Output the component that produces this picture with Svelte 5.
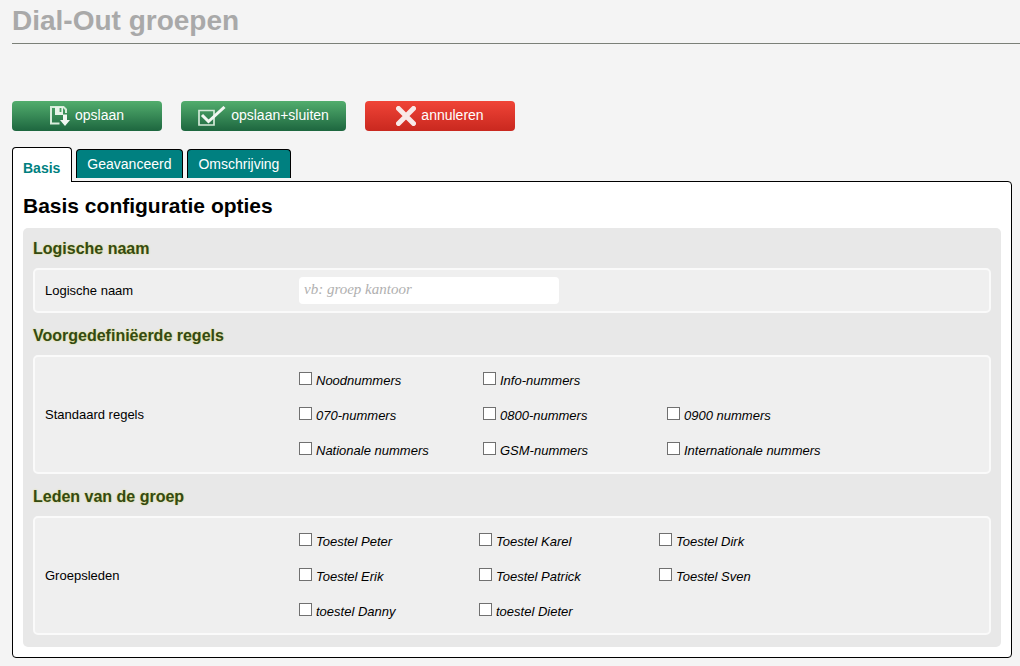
<script>
  /** Dial-Out groepen — formulier om een groep aan te maken of te wijzigen. */

  const tabs = ['Basis', 'Geavanceerd', 'Omschrijving']

  const rules = [
    ['Noodnummers', 'Info-nummers'],
    ['070-nummers', '0800-nummers', '0900 nummers'],
    ['Nationale nummers', 'GSM-nummers', 'Internationale nummers'],
  ]

  const members = [
    ['Toestel Peter', 'Toestel Karel', 'Toestel Dirk'],
    ['Toestel Erik', 'Toestel Patrick', 'Toestel Sven'],
    ['toestel Danny', 'toestel Dieter'],
  ]

  let activeTab = $state('Basis')
  let name = $state('')
  let selected = $state([])
</script>

{#snippet checks(rows)}
  {#each rows as row}
    <div class="checks__row">
      {#each row as item}
        <label class="check">
          <input type="checkbox" value={item} bind:group={selected} />
          <span>{item}</span>
        </label>
      {/each}
    </div>
  {/each}
{/snippet}

<main class="page">
  <h1>Dial-Out groepen</h1>

  <form onsubmit={(e) => e.preventDefault()}>
    <div class="actions">
      <button type="submit" class="btn btn--green">
        <svg width="20" height="20" viewBox="0 0 20 20" fill="none" aria-hidden="true">
          <path d="M9.500 17.500H1V1h12.500L16 3.500V7" stroke="#d8ecdc" stroke-width="2" />
          <path d="M5 1v8h8V1z" fill="#e8f3ea" />
          <path d="M10.500 2v4" stroke="#47a063" stroke-width="1.800" />
          <path d="M13 8.500h4V14h3l-5 6L10 14h3z" fill="#f1f7f2" />
        </svg>
        opslaan
      </button>
      <button type="submit" class="btn btn--green btn--wide">
        <svg width="28" height="20" viewBox="0 0 28 20" fill="none" aria-hidden="true">
          <path d="M1 4.500h15v14.500H1z" stroke="#d3e9d8" stroke-width="1.700" />
          <path d="M4 9l6.500 6.500L26.500 1" stroke="#f1f7f2" stroke-width="3" />
        </svg>
        opslaan+sluiten
      </button>
      <button type="button" class="btn btn--red">
        <svg width="20" height="20" viewBox="0 0 20 20" aria-hidden="true">
          <path d="M2.500 2.500l15 15M17.500 2.500l-15 15" stroke="#f8e9e8" stroke-width="5" stroke-linecap="round" />
        </svg>
        annuleren
      </button>
    </div>

    <div class="tabs" role="tablist">
      {#each tabs as tab}
        <button
          type="button"
          class="tab"
          class:tab--active={tab === activeTab}
          role="tab"
          aria-selected={tab === activeTab}
          onclick={() => (activeTab = tab)}
        >{tab}</button>
      {/each}
    </div>

    <div class="panel" role="tabpanel">
      <h2>Basis configuratie opties</h2>

      <div class="sections">
        <h3>Logische naam</h3>
        <div class="box box--input">
          <label for="name">Logische naam</label>
          <input id="name" class="text" type="text" placeholder="vb: groep kantoor" bind:value={name} />
        </div>

        <h3>Voorgedefiniëerde regels</h3>
        <div class="box" role="group" aria-labelledby="rules">
          <span id="rules">Standaard regels</span>
          <div class="checks">{@render checks(rules)}</div>
        </div>

        <h3>Leden van de groep</h3>
        <div class="box" role="group" aria-labelledby="members">
          <span id="members">Groepsleden</span>
          <div class="checks checks--narrow">{@render checks(members)}</div>
        </div>
      </div>
    </div>
  </form>
</main>

<style>
  :global(body) {
    background: #f4f4f4;
  }

  .page {
    padding: 5px 0 8px 12px;
    font-family: Arial, 'Liberation Sans', sans-serif;
    font-size: 13px;
    color: #000;
  }

  h1 {
    margin: 0 0 57px;
    padding-bottom: 6px;
    border-bottom: 1px solid #7b8078;
    font-size: 28px;
    line-height: 32px;
    color: #a9a9a9;
  }

  .actions {
    display: flex;
    gap: 19px;
    margin-bottom: 16px;
  }

  .btn {
    display: flex;
    align-items: center;
    justify-content: center;
    gap: 5px;
    width: 150px;
    height: 30px;
    padding: 0 0 2px;
    border: 0;
    border-radius: 4px;
    font-family: inherit;
    font-size: 14px;
    color: #fff;
    cursor: pointer;
  }

  .btn svg {
    margin-top: 2px;
  }

  .btn--green {
    background: linear-gradient(#52ad6d, #1d663f);
  }

  .btn--wide {
    width: 165px;
  }

  .btn--red {
    background: linear-gradient(#f04437, #c9281f);
  }

  .tabs {
    display: flex;
    align-items: flex-start;
    gap: 4px;
    padding-top: 2px;
    height: 32px;
  }

  .tab {
    height: 29px;
    padding: 0 11px 0 10px;
    border: 1px solid #000;
    border-bottom: 0;
    border-radius: 4px 4px 0 0;
    background: #008080;
    font-family: inherit;
    font-size: 14px;
    line-height: 28px;
    color: #fff;
    cursor: pointer;
  }

  .tab--active {
    z-index: 1;
    height: 35px;
    margin-top: -2px;
    padding-top: 6px;
    background: #fff;
    font-weight: bold;
    color: #008080;
  }

  .panel {
    margin-right: 8px;
    padding: 12px 10px 10px;
    border: 1px solid #000;
    border-radius: 0 4px 4px 4px;
    background: #fff;
  }

  h2 {
    margin: 0 0 10px;
    font-size: 21px;
    line-height: 24px;
  }

  .sections {
    padding: 12px 10px;
    border-radius: 5px;
    background: #e8e8e8;
  }

  h3 {
    margin: 0 0 10px;
    font-size: 16px;
    line-height: 18px;
    color: #344a12;
    text-shadow: 0 0 2px #d8d870;
  }

  .box {
    display: grid;
    grid-template-columns: 254px 1fr;
    align-items: center;
    padding: 5px 10px;
    border: 2px solid #fafafa;
    border-radius: 5px;
    background: #efefef;
  }

  .box--input {
    padding: 7px 10px;
  }

  .box + h3 {
    margin-top: 14px;
  }

  .text {
    box-sizing: border-box;
    width: 260px;
    height: 27px;
    padding: 0 5px 2px;
    border: 0;
    border-radius: 4px;
    background: #fff;
    font-family: Georgia, 'Liberation Serif', serif;
    font-size: 15px;
    font-style: italic;
  }

  .text::placeholder {
    color: #b0b0b0;
  }

  .checks__row {
    display: grid;
    grid-template-columns: repeat(3, 184px);
    align-items: center;
    height: 35px;
  }

  .checks--narrow .checks__row {
    grid-template-columns: repeat(3, 180px);
  }

  .check {
    display: flex;
    gap: 4px;
    padding-top: 3px;
    line-height: 18px;
    font-style: italic;
  }

  .check input {
    appearance: none;
    width: 13px;
    height: 13px;
    margin: 0;
    border: 1px solid #707070;
    background: #fff;
  }

  .check input:checked {
    background: #008080;
    box-shadow: inset 0 0 0 2px #fff;
  }
</style>
